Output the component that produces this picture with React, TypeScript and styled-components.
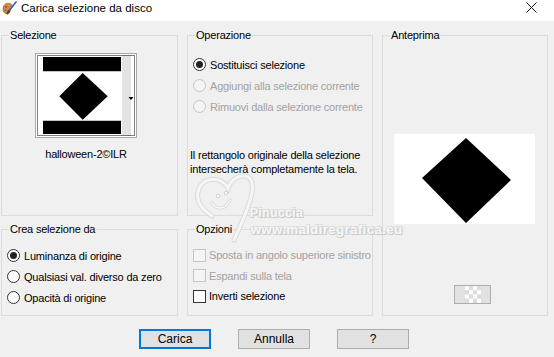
import React from "react";
import styled, { createGlobalStyle } from "styled-components";

const UI_FONT = `"Liberation Sans", Arial, sans-serif`;

const GlobalStyle = createGlobalStyle`
	html, body {
		margin: 0;
		padding: 0;
		background: #f0f0f0;
	}
	* {
		box-sizing: border-box;
	}
`;

const Window = styled.div`
	position: relative;
	width: 554px;
	height: 357px;
	background: #f0f0f0;
	display: flex;
	flex-direction: column;
	font-family: ${UI_FONT};
	font-size: 11px;
	letter-spacing: -0.2px;
	color: #000;
	overflow: hidden;
`;

const TitleBar = styled.div`
	height: 21px;
	background: #fff;
	display: flex;
	align-items: flex-start;
	padding: 1px 0 0 2px;
	font-size: 11.5px;
	letter-spacing: 0;
`;

const TitleText = styled.span`
	margin-left: 4px;
	line-height: 14px;
	flex: 1;
`;

const CloseButton = styled.div`
	width: 46px;
	height: 20px;
	display: flex;
	justify-content: center;
	padding-top: 2px;
	margin-top: -1px;
`;

const Groups = styled.div`
	display: grid;
	grid-template-columns: 177px 186px 166px;
	grid-template-rows: 188px 94px;
	column-gap: 9px;
	row-gap: 6px;
	padding: 7px 0 0 1px;
`;

const Group = styled.fieldset<{ $col: number; $row: string }>`
	margin: 0;
	padding: 0;
	min-width: 0;
	border: 1px solid #dcdcdc;
	grid-column: ${({ $col }) => $col};
	grid-row: ${({ $row }) => $row};
	display: flex;
	flex-direction: column;
`;

const Legend = styled.legend`
	margin-left: 7px;
	padding: 0 1px;
	line-height: 14px;
	font-size: 11px;
`;

const SelectionBody = styled.div`
	display: flex;
	flex-direction: column;
	align-items: flex-start;
	padding: 11px 0 0 33px;
`;

const Thumb = styled.div`
	width: 102px;
	height: 85px;
	border: 1px solid #a9a9a9;
	background: #fff;
`;

const ThumbCaption = styled.div`
	width: 102px;
	margin-top: 10px;
	text-align: center;
	line-height: 13px;
`;

const OptionList = styled.div<{ $top: number }>`
	display: flex;
	flex-direction: column;
	padding: ${({ $top }) => $top}px 0 0 5px;
`;

const OptionRow = styled.label<{ $disabled?: boolean; $h?: number }>`
	display: flex;
	align-items: center;
	height: ${({ $h }) => $h ?? 21}px;
	color: ${({ $disabled }) => ($disabled ? "#a2a2a2" : "#000")};
	white-space: nowrap;
`;

const RadioCircle = styled.span<{ $checked?: boolean; $disabled?: boolean }>`
	width: 13px;
	height: 13px;
	border-radius: 50%;
	border: 1px solid ${({ $disabled }) => ($disabled ? "#c6c6c6" : "#333")};
	background: ${({ $disabled }) => ($disabled ? "#f4f4f4" : "#fff")};
	display: flex;
	align-items: center;
	justify-content: center;
	margin-right: 4px;
	flex: none;
	&::after {
		content: "";
		width: 7px;
		height: 7px;
		border-radius: 50%;
		background: #222;
		display: ${({ $checked }) => ($checked ? "block" : "none")};
	}
`;

const CheckSquare = styled.span<{ $disabled?: boolean }>`
	width: 13px;
	height: 13px;
	border: 1px solid ${({ $disabled }) => ($disabled ? "#c6c6c6" : "#333")};
	background: ${({ $disabled }) => ($disabled ? "#f4f4f4" : "#fff")};
	margin-right: 3px;
	flex: none;
`;

const Note = styled.p`
	margin: 31px 0 0 2px;
	line-height: 14px;
	white-space: nowrap;
`;

const PreviewBody = styled.div`
	display: flex;
	flex-direction: column;
	align-items: flex-start;
	padding: 92px 0 0 11px;
`;

const PreviewCanvas = styled.div`
	width: 141px;
	height: 90px;
	background: #fff;
`;

const CheckerButton = styled.div`
	width: 37px;
	height: 19px;
	margin: 61px 0 0 60px;
	border: 1px solid #adadad;
	background: #e1e1e1;
	display: flex;
	justify-content: center;
`;

const ButtonRow = styled.div`
	display: flex;
	gap: 27px;
	padding: 13px 0 0 139px;
`;

const Button = styled.div<{ $default?: boolean }>`
	width: 72px;
	height: 20px;
	background: #e1e1e1;
	border: ${({ $default }) => ($default ? "2px solid #0078d7" : "1px solid #adadad")};
	display: flex;
	align-items: center;
	justify-content: center;
	font-size: 12px;
	letter-spacing: 0;
`;

const Watermark = styled.div`
	position: absolute;
	left: 194px;
	top: 170px;
	width: 230px;
	height: 75px;
	pointer-events: none;
`;

const WatermarkText = styled.div<{ $size: number; $left: number; $top: number }>`
	position: absolute;
	left: ${({ $left }) => $left}px;
	top: ${({ $top }) => $top}px;
	font-weight: bold;
	font-size: ${({ $size }) => $size}px;
	letter-spacing: 0.5px;
	color: #f7f7f7;
	white-space: nowrap;
	text-shadow: 1px 1px 0 #c8c8c8, -1px -1px 0 #e2e2e2, 1px -1px 0 #d8d8d8, -1px 1px 0 #d8d8d8;
`;

function AppIcon() {
	return (
		<svg width="15" height="15" viewBox="0 0 15 15">
			<path d="M1 8 C1 3 6 1 9 3 C11 4 10 6 8 6 C7 7 9 9 8 11 C6 14 1 13 1 8 Z" fill="#d88a3a" stroke="#8a4a1a" strokeWidth="0.6" />
			<circle cx="4" cy="6" r="1" fill="#e03020" />
			<circle cx="3.5" cy="9" r="1" fill="#2a7fd0" />
			<circle cx="5.5" cy="11" r="1" fill="#30a040" />
			<path d="M14 1 L7 10" stroke="#3060c0" strokeWidth="1.6" strokeLinecap="round" />
			<path d="M7 10 L5.5 12.5" stroke="#5a3a1a" strokeWidth="1.8" strokeLinecap="round" />
		</svg>
	);
}

function CloseIcon() {
	return (
		<svg width="11" height="11" viewBox="0 0 11 11">
			<path d="M0.5 0.5 L10.5 10.5 M10.5 0.5 L0.5 10.5" stroke="#111" strokeWidth="1" />
		</svg>
	);
}

function SelectionThumb() {
	return (
		<svg width="100" height="83" viewBox="0 0 100 83">
			<rect x="86" y="1" width="9" height="81" fill="#e3e3e3" />
			<rect x="7" y="3" width="78" height="14" fill="#000" />
			<rect x="7" y="17" width="78" height="1" fill="#c4c4c4" />
			<rect x="7" y="66" width="78" height="1" fill="#c4c4c4" />
			<rect x="7" y="67" width="78" height="13" fill="#000" />
			<polygon points="46.7,19 71.7,42.3 46.7,65.7 23.3,42.3" fill="#000" />
			<polygon points="92.5,43 97.5,43 95,46" fill="#000" />
			<rect x="1.5" y="1.5" width="97" height="80" fill="none" stroke="#000" strokeWidth="1" strokeDasharray="1 1" />
		</svg>
	);
}

function PreviewShape() {
	return (
		<svg width="141" height="90" viewBox="0 0 141 90">
			<polygon points="72,4 117,46 72,89 28,44" fill="#000" />
		</svg>
	);
}

function Checker() {
	const cells = [];
	for (let r = 0; r < 4; r++) {
		for (let c = 0; c < 4; c++) {
			cells.push(
				<rect key={`${r}-${c}`} x={c * 4} y={r * 4.25} width="4" height="4.25" fill={(r + c) % 2 === 0 ? "#ffffff" : "#dcdcdc"} />
			);
		}
	}
	return (
		<svg width="16" height="17" viewBox="0 0 16 17">
			{cells}
		</svg>
	);
}

const HEART = "M18 46 C6 38 2 30 4 22 C6 8 26 4 34 18 C40 2 62 0 58 22 C56 36 48 52 40 70";

function WatermarkHeart() {
	return (
		<svg width="70" height="75" viewBox="0 0 70 75" style={{ position: "absolute", left: 0, top: 0 }}>
			<g fill="none" strokeLinecap="round">
				<path d={HEART} stroke="#dadada" strokeWidth="5" />
				<path d={HEART} stroke="#f6f6f6" strokeWidth="3" />
				<circle cx="24" cy="26" r="1.8" fill="#fff" stroke="#d2d2d2" />
				<circle cx="32" cy="23" r="1.8" fill="#fff" stroke="#d2d2d2" />
				<path d="M18 33 C22 40 32 40 36 30" stroke="#d4d4d4" strokeWidth="3" />
				<path d="M18 33 C22 40 32 40 36 30" stroke="#f8f8f8" strokeWidth="1.6" />
			</g>
		</svg>
	);
}

function Radio({ label, checked, disabled }: { label: string; checked?: boolean; disabled?: boolean }) {
	return (
		<OptionRow $disabled={disabled} $h={21}>
			<RadioCircle $checked={checked} $disabled={disabled} />
			{label}
		</OptionRow>
	);
}

function Check({ label, disabled }: { label: string; disabled?: boolean }) {
	return (
		<OptionRow $disabled={disabled} $h={20.5}>
			<CheckSquare $disabled={disabled} />
			{label}
		</OptionRow>
	);
}

export default function App() {
	return (
		<>
			<GlobalStyle />
			<Window>
				<TitleBar>
					<AppIcon />
					<TitleText>Carica selezione da disco</TitleText>
					<CloseButton>
						<CloseIcon />
					</CloseButton>
				</TitleBar>

				<Groups>
					<Group $col={1} $row="1">
						<Legend>Selezione</Legend>
						<SelectionBody>
							<Thumb>
								<SelectionThumb />
							</Thumb>
							<ThumbCaption>halloween-2©ILR</ThumbCaption>
						</SelectionBody>
					</Group>

					<Group $col={2} $row="1">
						<Legend>Operazione</Legend>
						<OptionList $top={12}>
							<Radio label="Sostituisci selezione" checked />
							<Radio label="Aggiungi alla selezione corrente" disabled />
							<Radio label="Rimuovi dalla selezione corrente" disabled />
						</OptionList>
						<Note>
							Il rettangolo originale della selezione
							<br />
							intersecherà completamente la tela.
						</Note>
					</Group>

					<Group $col={3} $row="1 / span 2">
						<Legend>Anteprima</Legend>
						<PreviewBody>
							<PreviewCanvas>
								<PreviewShape />
							</PreviewCanvas>
							<CheckerButton>
								<Checker />
							</CheckerButton>
						</PreviewBody>
					</Group>

					<Group $col={1} $row="2">
						<Legend>Crea selezione da</Legend>
						<OptionList $top={9}>
							<Radio label="Luminanza di origine" checked />
							<Radio label="Qualsiasi val. diverso da zero" />
							<Radio label="Opacità di origine" />
						</OptionList>
					</Group>

					<Group $col={2} $row="2">
						<Legend>Opzioni</Legend>
						<OptionList $top={9}>
							<Check label="Sposta in angolo superiore sinistro" disabled />
							<Check label="Espandi sulla tela" disabled />
							<Check label="Inverti selezione" />
						</OptionList>
					</Group>
				</Groups>

				<ButtonRow>
					<Button $default>Carica</Button>
					<Button>Annulla</Button>
					<Button>?</Button>
				</ButtonRow>

				<Watermark>
					<WatermarkHeart />
					<WatermarkText $size={12} $left={56} $top={36}>Pinuccia</WatermarkText>
					<WatermarkText $size={13} $left={57} $top={52}>www.maldiregrafica.eu</WatermarkText>
				</Watermark>
			</Window>
		</>
	);
}
